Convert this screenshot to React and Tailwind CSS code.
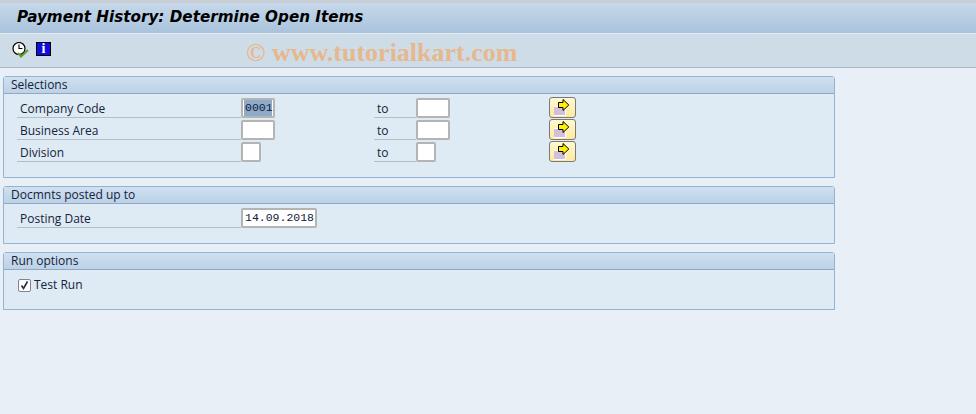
const sans = "font-['Open_Sans','DejaVu_Sans',sans-serif]";

function Field({ w, value, selected }) {
  return (
    <div className={`h-5 ${w} shrink-0 bg-white border-2 border-[#b4b4b4] rounded-[2px] flex items-center px-px font-['Liberation_Mono',monospace] text-[11.5px] text-[#10203a]`}>
      {selected ? <span className="bg-[#8fa9c9] w-full h-full flex items-center pl-px">{value}</span> : <span className="pl-px">{value}</span>}
    </div>
  );
}

function Label({ children, w }) {
  return (
    <div className={`h-5 ${w} shrink-0 border-b border-[#b5bcc4] flex items-center pl-[3px] pt-[2px] text-[12px] text-[#14233a]`}>{children}</div>
  );
}

function ArrowButton() {
  return (
    <div className="w-[27px] h-[21px] self-start rounded-[3px] border border-[#77797c] bg-gradient-to-b from-[#fff8d2] to-[#ffe99a]">
      <svg width="25" height="19" viewBox="0 0 25 19" className="block">
        <rect x="4" y="8" width="12" height="10" fill="#fff" />
        <rect x="4" y="9" width="11" height="8" fill="#d3bfdc" />
        <path d="M8.5 4.5H13V1.5L18.8 7 13 12.5V9.5H8.5Z" fill="#fff200" stroke="#000" strokeWidth="1" />
      </svg>
    </div>
  );
}

function Panel({ title, height, children }) {
  return (
    <section className={`${height} w-[832px] border border-[#94b3d3] rounded-t-[3px] bg-[#deeaf4] flex flex-col`}>
      <h2 className="h-[17px] shrink-0 bg-gradient-to-b from-[#cfe0f0] to-[#bcd2e7] border-b border-[#8fa8c6] pl-[7px] text-[12px] leading-[16px] text-[#14233a]">{title}</h2>
      {children}
    </section>
  );
}

function SelectionRow({ label, value, selected, w, spacer }) {
  return (
    <div className="flex items-center h-[22px]">
      <Label w="w-[224px]">{label}</Label>
      <Field w={w} value={value} selected={selected} />
      <div className={`${spacer} shrink-0`} />
      <Label w="w-[42px]">to</Label>
      <Field w={w} />
      <div className={`${spacer} shrink-0`} />
      <ArrowButton />
    </div>
  );
}

export default function App() {
  return (
    <div className={`w-[976px] h-[414px] overflow-hidden bg-[#e8eff7] ${sans}`}>
      <div className="h-[3px] bg-[#c9ced4]" />
      <header className="h-[31px] bg-gradient-to-b from-[#c6d8ea] to-[#a9c3dc] border-b border-[#e3ecf4] pl-[17px] flex items-center">
        <h1 className="font-['DejaVu_Sans',sans-serif] font-bold italic text-[15.2px] text-black leading-none pb-px">Payment History: Determine Open Items</h1>
      </header>
      <div className="h-[34px] bg-[#cedce8] border-b border-[#a9b6c3] flex items-start pl-[12px] pt-[8px] gap-[7px] relative">
        <svg width="17" height="16" viewBox="0 0 17 16">
          <circle cx="7" cy="6.5" r="6" fill="#fff" stroke="#000" strokeWidth="1.2" />
          <path d="M7 2.5V6.5H10.5" fill="none" stroke="#000" strokeWidth="1.1" />
          <path d="M6 11L9 14.5 16 8" fill="none" stroke="#5ca02c" strokeWidth="2" />
        </svg>
        <div className="w-[15px] h-[14px] bg-[#0d0fe0] border border-black flex items-center justify-center">
          <span className="font-['Liberation_Serif',serif] font-bold text-white text-[14px] leading-none">i</span>
        </div>
        <span className="absolute left-[246px] top-[6px] font-['Liberation_Serif',serif] font-bold text-[26px] leading-[26px] text-[#e6b88d]">© www.tutorialkart.com</span>
      </div>
      <main className="pl-[3px] pt-[8px] flex flex-col gap-[8px]">
        <Panel title="Selections" height="h-[102px]">
          <div className="pl-[13px] pt-[3px]">
            <SelectionRow label="Company Code" value="0001" selected w="w-[34px]" spacer="w-[99px]" />
            <SelectionRow label="Business Area" w="w-[34px]" spacer="w-[99px]" />
            <SelectionRow label="Division" w="w-[20px]" spacer="w-[113px]" />
          </div>
        </Panel>
        <Panel title="Docmnts posted up to" height="h-[58px]">
          <div className="pl-[13px] pt-[3px]">
            <div className="flex items-center h-[22px]">
              <Label w="w-[224px]">Posting Date</Label>
              <Field w="w-[76px]" value="14.09.2018" />
            </div>
          </div>
        </Panel>
        <Panel title="Run options" height="h-[58px]">
          <div className="pl-[14px] pt-[6px] flex items-center gap-[3px] text-[12px] text-[#14233a]">
            <div className="w-[13px] h-[13px] bg-white border border-[#7d8690] rounded-[2px] flex items-center justify-center">
              <svg width="11" height="11" viewBox="0 0 11 11"><path d="M2.5 5.5L4.5 8.5 8.5 1.5" fill="none" stroke="#24303c" strokeWidth="1.6" /></svg>
            </div>
            <span>Test Run</span>
          </div>
        </Panel>
      </main>
    </div>
  );
}
